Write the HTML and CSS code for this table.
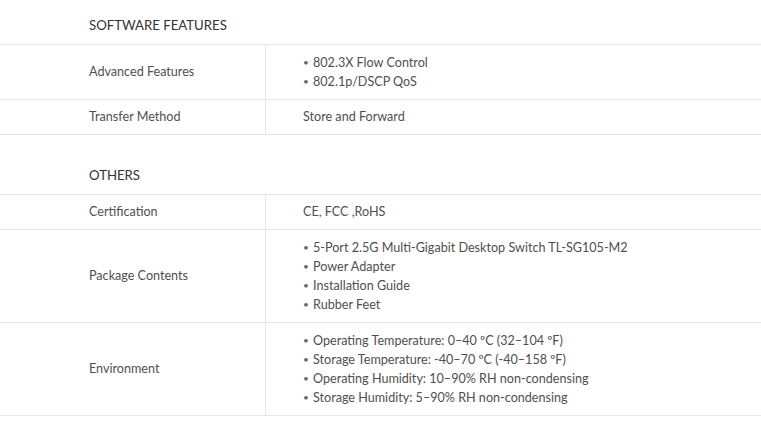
FILE: index.html
```html
<!DOCTYPE html>
<html lang="en">
<head>
<meta charset="utf-8">
<title>Specifications</title>
<link rel="stylesheet" href="styles.css">
</head>
<body>
<section class="spec">
  <h3 class="spec-title">SOFTWARE FEATURES</h3>
  <div class="spec-table">
    <div class="row">
      <div class="label">Advanced Features</div>
      <div class="value">
        <ul class="bullets">
          <li>802.3X Flow Control</li>
          <li>802.1p/DSCP QoS</li>
        </ul>
      </div>
    </div>
    <div class="row">
      <div class="label">Transfer Method</div>
      <div class="value">Store and Forward</div>
    </div>
  </div>
</section>
<section class="spec spec-next">
  <h3 class="spec-title">OTHERS</h3>
  <div class="spec-table">
    <div class="row">
      <div class="label">Certification</div>
      <div class="value">CE, FCC ,RoHS</div>
    </div>
    <div class="row">
      <div class="label">Package Contents</div>
      <div class="value">
        <ul class="bullets">
          <li>5-Port 2.5G Multi-Gigabit Desktop Switch TL-SG105-M2</li>
          <li>Power Adapter</li>
          <li>Installation Guide</li>
          <li>Rubber Feet</li>
        </ul>
      </div>
    </div>
    <div class="row">
      <div class="label">Environment</div>
      <div class="value">
        <ul class="bullets">
          <li>Operating Temperature: 0–40 ºC (32–104 ºF)</li>
          <li>Storage Temperature: -40–70 ºC (-40–158 ºF)</li>
          <li>Operating Humidity: 10–90% RH non-condensing</li>
          <li>Storage Humidity: 5–90% RH non-condensing</li>
        </ul>
      </div>
    </div>
  </div>
</section>
</body>
</html>
```
FILE: styles.css
```css
* { box-sizing: border-box; }
html, body { margin: 0; padding: 0; background: #fff; }
body {
  font-family: Lato, "Liberation Sans", sans-serif;
  font-size: 12.6px;
  color: #4f4f4f;
  width: 761px;
}
.spec-title {
  margin: 0;
  height: 44px;
  padding: 16px 0 0 89px;
  font-size: 13.2px;
  font-weight: 400;
  line-height: 19px;
  color: #333;
}
.spec-next { margin-top: 15px; }
.spec-table { border-top: 1px solid #e5e5e5; }
.row {
  display: flex;
  border-bottom: 1px solid #e5e5e5;
}
.label {
  width: 266px;
  flex: none;
  padding: 8px 0 8px 89px;
  line-height: 18px;
  border-right: 1px solid #e5e5e5;
  display: flex;
  align-items: center;
}
.value {
  flex: 1;
  padding: 8px 0 8px 37px;
  line-height: 18px;
}
.bullets { list-style: none; margin: 0; padding: 0; }
.bullets li { line-height: 19px; }
.bullets li::before {
  content: "•";
  display: inline-block;
  width: 10px;
  font-size: 10px;
  line-height: 19px;
  vertical-align: top;
  color: #666;
}
```
